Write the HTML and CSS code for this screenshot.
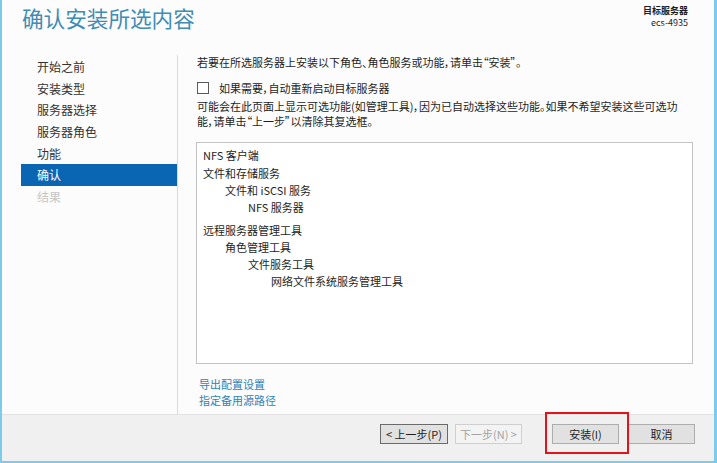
FILE: index.html
```html
<!DOCTYPE html>
<html lang="zh-CN">
<head>
  <meta charset="UTF-8">
  <title>确认安装所选内容</title>
  <link rel="stylesheet" href="styles.css">
</head>
<body>
  <div class="wizard">
    <div class="header">
      <h1 class="title">确认安装所选内容</h1>
      <div class="target">
        <div class="target-label">目标服务器</div>
        <div class="target-name">ecs-4935</div>
      </div>
    </div>

    <div class="content">
      <ul class="steps">
        <li>开始之前</li>
        <li>安装类型</li>
        <li>服务器选择</li>
        <li>服务器角色</li>
        <li>功能</li>
        <li class="active">确认</li>
        <li class="disabled">结果</li>
      </ul>

      <div class="main">
        <p class="intro">若要在所选服务器上安装以下角色、角色服务或功能，请单击“安装”。</p>
        <label class="check"><span class="box-check"></span>如果需要，自动重新启动目标服务器</label>
        <p class="note">可能会在此页面上显示可选功能(如管理工具)，因为已自动选择这些功能。如果不希望安装这些可选功<br>能，请单击“上一步”以清除其复选框。</p>

        <div class="selection">
          <div class="group first">
            <div class="lvl0">NFS 客户端</div>
          </div>
          <div class="group">
            <div class="lvl0">文件和存储服务</div>
            <div class="lvl1">文件和 iSCSI 服务</div>
            <div class="lvl2">NFS 服务器</div>
          </div>
          <div class="group">
            <div class="lvl0">远程服务器管理工具</div>
            <div class="lvl1">角色管理工具</div>
            <div class="lvl2">文件服务工具</div>
            <div class="lvl3">网络文件系统服务管理工具</div>
          </div>
        </div>

        <div class="links">
          <a href="#">导出配置设置</a>
          <a href="#">指定备用源路径</a>
        </div>
      </div>
    </div>

    <div class="footer">
      <button class="btn btn-prev">&lt;&nbsp;上一步(P)</button>
      <button class="btn btn-next" disabled>下一步(N)&nbsp;&gt;</button>
      <button class="btn btn-install">安装(I)</button>
      <button class="btn btn-cancel">取消</button>
      <div class="highlight"></div>
    </div>
  </div>
</body>
</html>
```

FILE: styles.css
```css
html, body {
  margin: 0;
  padding: 0;
  width: 717px;
  height: 463px;
  overflow: hidden;
  font-family: "Noto Sans CJK SC", "Noto Sans", sans-serif;
  font-size: 12px;
  color: #1e1e1e;
}

.wizard {
  width: 717px;
  height: 463px;
  box-sizing: border-box;
  border-left: 2px solid #7ccbeb;
  border-right: 3px solid #7ccbeb;
  border-bottom: 2px solid #7ccbeb;
  background-color: #fcfcfc;
  display: flex;
  flex-direction: column;
}

/* шапка */
.header {
  height: 55px;
  flex: none;
  display: flex;
  justify-content: space-between;
  padding: 0 26px 0 20px;
}

.title {
  margin: 7px 0 0 0;
  font-size: 21.6px;
  line-height: 22px;
  font-weight: normal;
  color: #3f8cb5;
}

.target {
  margin-top: 5px;
  text-align: right;
  font-size: 9px;
  line-height: 12px;
  color: #1e1e1e;
}

.target-label {
  font-weight: bold;
}

/* основная часть */
.content {
  flex: 1;
  display: flex;
}

.steps {
  flex: none;
  list-style: none;
  margin: 0 0 0 19px;
  padding: 1px 0 0 0;
  width: 156px;
}

.steps li {
  line-height: 21.66px;
  padding-left: 16px;
  color: #333;
}

.steps li.active {
  background-color: #0a66b3;
  color: #fff;
}

.steps li.disabled {
  color: #c6c6c6;
}

.main {
  flex: 1;
  min-width: 0;
  border-left: 1px solid #dadada;
  padding: 0 21px 0 19px;
  font-size: 11px;
  font-feature-settings: "palt";
}

.intro {
  margin: 0;
  line-height: 14px;
}

.check {
  display: flex;
  align-items: center;
  margin-top: 12px;
  line-height: 14px;
}

.box-check {
  width: 10px;
  height: 10px;
  border: 1px solid #5a5a5a;
  background-color: #fff;
  margin-right: 10px;
}

.note {
  margin: 4px 0 0 0;
  line-height: 15px;
  white-space: nowrap;
}

.selection {
  margin-top: 13px;
  margin-left: -1px;
  height: 222px;
  box-sizing: border-box;
  border: 1px solid #c4c4c4;
  background-color: #fff;
  padding: 4px 6px;
  line-height: 17px;
}

.group.first {
  margin-bottom: 1px;
}

.group {
  margin-bottom: 6px;
}

.lvl1 { padding-left: 22px; }
.lvl2 { padding-left: 45px; }
.lvl3 { padding-left: 68px; }

.links {
  margin-top: 12px;
  padding-left: 2px;
  line-height: 16px;
}

.links a {
  display: block;
  color: #2f83b8;
  text-decoration: none;
}

/* нижняя панель с кнопками */
.footer {
  flex: none;
  height: 37px;
  border-top: 1px solid #e2e2e2;
  background-color: #f0f0f0;
  display: flex;
  justify-content: flex-end;
  align-items: flex-start;
  padding: 9px 19px 0 0;
  box-sizing: content-box;
  position: relative;
}

.btn {
  height: 20px;
  width: 67px;
  box-sizing: border-box;
  padding: 0;
  font-family: inherit;
  font-size: 11px;
  line-height: 18px;
  color: #1e1e1e;
  background-color: #e1e1e1;
  border: 1px solid #adadad;
}

.btn-prev {
  width: 68px;
  border-color: #6a6a6a;
}

.btn-next {
  margin-left: 7px;
  background-color: #f3f3f3;
  border-color: #cfcfcf;
  color: #a3a3a3;
}

.btn-install {
  margin-left: 30px;
}

.btn-cancel {
  margin-left: 9px;
}

/* красная рамка поверх кнопки */
.highlight {
  position: absolute;
  left: 543px;
  top: -3px;
  width: 84px;
  height: 42px;
  box-sizing: border-box;
  border: 2px solid #e3131b;
}
```
